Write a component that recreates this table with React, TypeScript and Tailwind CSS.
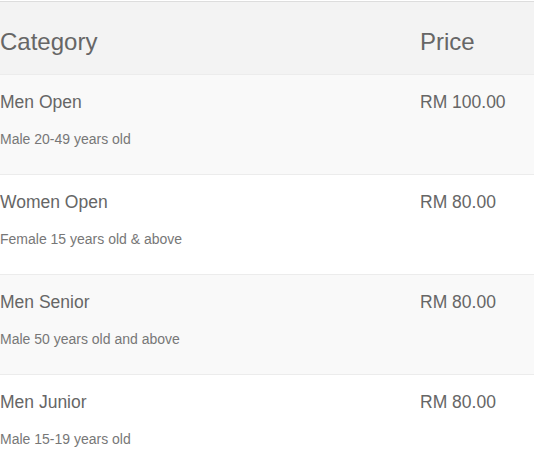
const categories = [
  { name: 'Men Open', desc: 'Male 20-49 years old', price: 'RM 100.00' },
  { name: 'Women Open', desc: 'Female 15 years old & above', price: 'RM 80.00' },
  { name: 'Men Senior', desc: 'Male 50 years old and above', price: 'RM 80.00' },
  { name: 'Men Junior', desc: 'Male 15-19 years old', price: 'RM 80.00' },
];

export default function App() {
  return (
    <div className="w-[534px] h-[462px] overflow-hidden bg-white pt-px font-['Liberation_Sans',Arial,sans-serif]">
      <div className="border-t border-[#dddddd]">
        {/* Table header */}
        <div className="flex h-[73px] pt-[24px] bg-[#f3f3f3] border-b border-[#ececec] text-[24px] leading-[32px] text-[#666666]">
          <div className="w-[420px]">Category</div>
          <div className="flex-1">Price</div>
        </div>

        {categories.map((c, i) => (
          <div
            key={c.name}
            className={`flex h-[100px] pt-[15px] border-b border-[#ececec] ${i % 2 === 0 ? 'bg-[#f9f9f9]' : 'bg-white'}`}
          >
            <div className="w-[420px]">
              <div className="text-[17.5px] leading-[24px] text-[#666666]">{c.name}</div>
              <div className="mt-[15px] text-[14px] leading-[20px] text-[#777777]">{c.desc}</div>
            </div>
            <div className="flex-1 text-[17.5px] leading-[24px] text-[#666666]">{c.price}</div>
          </div>
        ))}
      </div>
    </div>
  );
}
